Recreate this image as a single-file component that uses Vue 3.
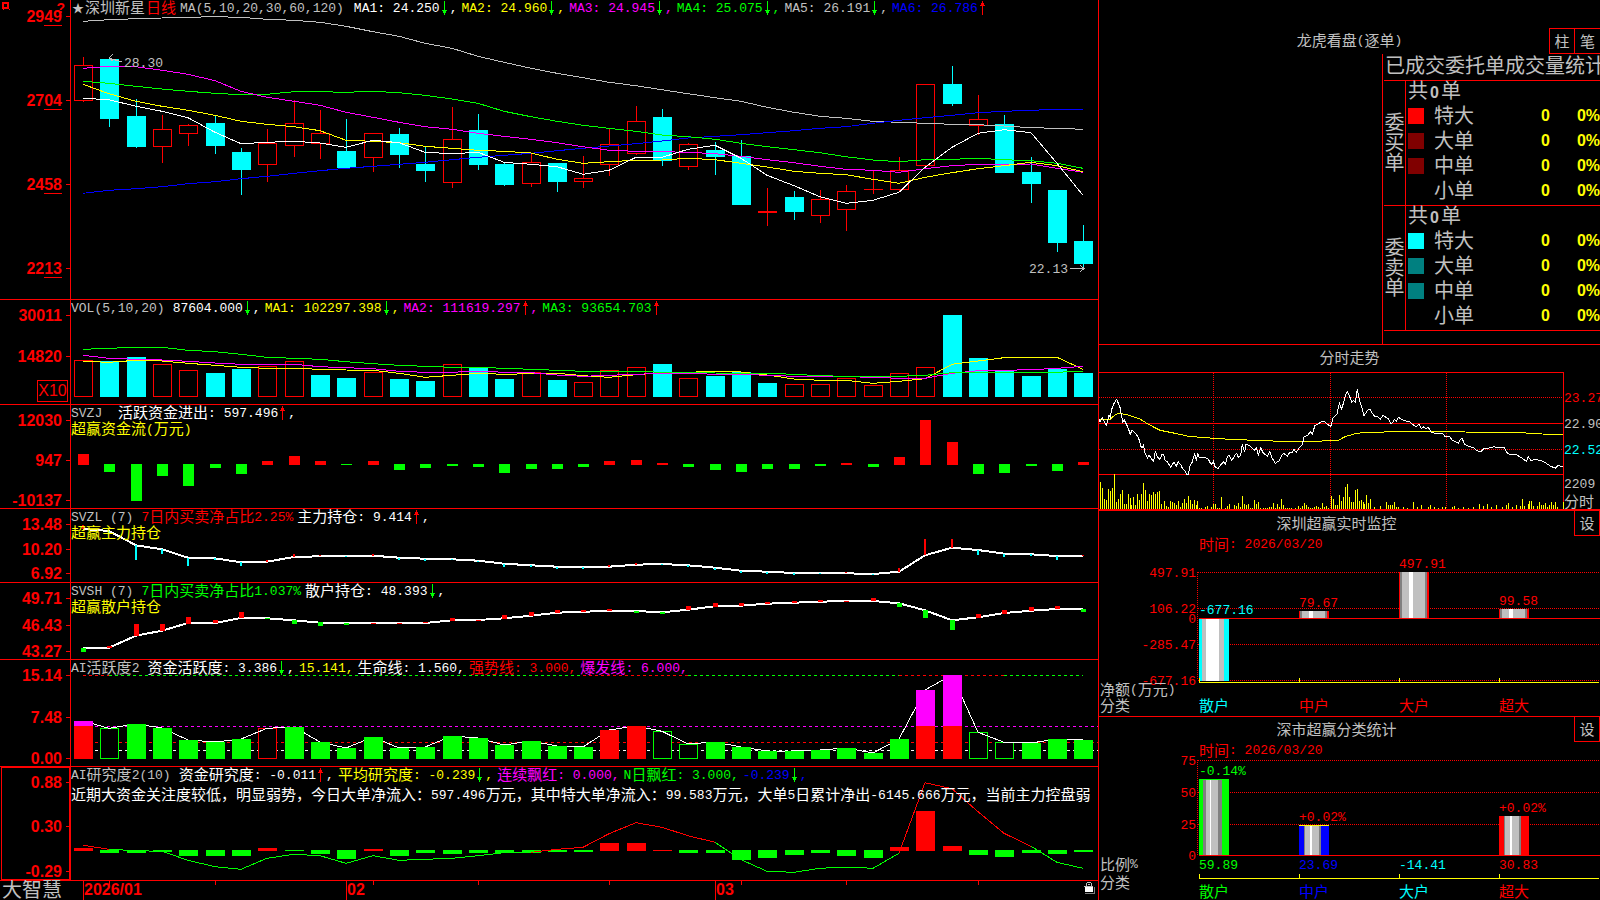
<script setup>
import { h } from 'vue'

/* Text with Chinese and Latin runs sized separately */
const Mixed = (props) =>
  h(
    'span',
    { class: 'mixed' },
    (String(props.text).match(/[\u2600-\uffef]+|[^\u2600-\uffef]+/g) || []).map((run) =>
      h('span', { class: /[\u2600-\uffef]/.test(run) ? 'zh' : 'en' }, run)
    )
  )
Mixed.props = ['text']

const RED = '#ff0000'
const GREEN = '#00ff00'
const CYAN = '#00ffff'
const YELLOW = '#ffff00'
const MAGENTA = '#ff00ff'
const WHITE = '#ffffff'
const GRAY = '#c0c0c0'
const BLUE = '#0000ff'

const PLOT_W = 1027
const cx = (i) => Math.floor(12.4 + i * 26.33)
/* Samples are kept in thirds of a chart unit */
const third = (v, base) => v / 3 + base
const line = (values, base) => values.map((v, i) => `${cx(i)},${third(v, base).toFixed(1)}`).join(' ')
const bar = (i, top, bottom, base, w = 19) => {
  const y = Math.round(third(top, base))
  return { x: cx(i) - Math.floor(w / 2), y, w, h: Math.max(1, Math.round(third(bottom, base)) - y) }
}

/* ---------- Price ---------- */
const priceRaw = [
  ['r', 171, 196, 302, 305], ['c', 177, 177, 357, 381], ['c', 297, 348, 441, 444], ['r', 345, 388, 440, 489],
  ['r', 372, 376, 401, 438], ['c', 346, 369, 438, 462], ['c', 444, 456, 510, 585], ['r', 387, 430, 494, 546],
  ['r', 300, 370, 437, 471], ['r', 330, 400, 431, 477], ['c', 357, 453, 504, 504], ['r', 400, 400, 473, 516],
  ['c', 384, 402, 465, 504], ['c', 439, 492, 513, 546], ['r', 321, 418, 548, 564], ['c', 342, 390, 495, 510],
  ['c', 490, 492, 555, 558], ['r', 461, 487, 551, 561], ['c', 489, 489, 546, 576], ['r', 468, 535, 545, 564],
  ['r', 387, 433, 494, 528], ['r', 318, 364, 461, 465], ['c', 327, 351, 483, 498], ['r', 429, 433, 500, 510],
  ['c', 426, 450, 471, 525], ['c', 420, 468, 615, 615], ['r', 564, 633, 639, 678], ['c', 573, 591, 636, 660],
  ['r', 570, 598, 647, 669], ['r', 555, 574, 629, 693], ['r', 513, 568, 568, 582], ['r', 471, 511, 569, 575],
  ['r', 253, 253, 497, 497], ['c', 198, 252, 312, 318], ['r', 285, 358, 377, 405], ['c', 345, 372, 519, 519],
  ['c', 471, 516, 552, 609], ['c', 570, 570, 729, 756], ['c', 675, 723, 792, 804]
]
const candles = priceRaw.map(([k, hi, top, bot, lo], i) => ({
  up: k === 'r', x: cx(i), hi: hi / 3, top: Math.round(top / 3), bot: Math.round(bot / 3), lo: lo / 3
}))
const priceLines = [
  { c: GRAY, v: [64, 59, 56, 54, 52, 50, 52, 58, 61, 67, 79, 95, 109, 130, 145, 169, 187, 205, 220, 233, 247, 257, 269, 281, 293, 304, 322, 337, 349, 355, 364, 367, 370, 373, 374, 378, 383, 385, 388] },
  { c: BLUE, v: [580, 571, 566, 560, 551, 545, 536, 529, 520, 512, 505, 499, 493, 487, 479, 472, 466, 460, 452, 445, 438, 431, 423, 414, 409, 404, 398, 392, 385, 380, 370, 361, 353, 346, 338, 334, 331, 328, 328] },
  { c: GREEN, v: [244, 250, 259, 267, 274, 280, 284, 283, 275, 275, 277, 274, 278, 286, 297, 310, 334, 350, 364, 376, 385, 394, 405, 410, 418, 430, 440, 449, 458, 470, 480, 485, 479, 478, 475, 479, 482, 490, 505] },
  { c: MAGENTA, v: [205, 199, 200, 211, 223, 242, 274, 292, 304, 316, 337, 352, 367, 380, 388, 400, 409, 418, 428, 440, 451, 454, 455, 457, 461, 469, 479, 488, 499, 508, 511, 517, 506, 497, 493, 493, 492, 505, 517] },
  { c: YELLOW, v: [253, 281, 304, 319, 331, 346, 364, 373, 380, 392, 421, 424, 428, 439, 445, 451, 454, 459, 478, 490, 485, 481, 480, 475, 479, 490, 501, 514, 520, 524, 538, 550, 532, 518, 506, 497, 487, 497, 515] },
  { c: WHITE, v: [295, 299, 319, 334, 353, 397, 431, 427, 424, 429, 442, 421, 428, 457, 461, 457, 487, 493, 500, 523, 511, 472, 472, 448, 436, 475, 526, 557, 590, 610, 601, 577, 502, 442, 400, 389, 398, 490, 586] }
].map((l) => ({ c: l.c, p: line(l.v, 0) }))

/* ---------- Volume ---------- */
const volTop = [211, 214, 201, 223, 241, 249, 237, 227, 214, 255, 264, 247, 267, 273, 223, 234, 267, 247, 270, 277, 241, 232, 222, 265, 258, 246, 279, 283, 283, 265, 286, 250, 232, 75, 204, 243, 258, 237, 249]
const volUp = [0, 3, 4, 7, 8, 11, 14, 17, 19, 20, 21, 23, 27, 28, 29, 30, 31, 32]
const volBars = volTop.map((t, i) => ({ ...bar(i, t, 321, -10), up: volUp.includes(i) }))
const volLines = [
  { c: YELLOW, v: [214, 217, 211, 213, 220, 226, 232, 235, 235, 238, 240, 241, 250, 262, 256, 250, 253, 251, 250, 257, 262, 254, 248, 247, 244, 246, 255, 267, 271, 271, 280, 274, 266, 223, 213, 203, 202, 202, 238] },
  { c: MAGENTA, v: [196, 205, 208, 210, 214, 219, 223, 223, 223, 230, 233, 236, 244, 247, 247, 243, 247, 248, 255, 259, 256, 253, 250, 250, 253, 253, 256, 259, 259, 260, 262, 265, 265, 250, 242, 241, 239, 235, 229] },
  { c: GREEN, v: [178, 175, 172, 172, 181, 185, 193, 202, 205, 208, 215, 221, 226, 229, 232, 232, 235, 238, 241, 244, 244, 244, 247, 247, 249, 250, 250, 253, 257, 259, 259, 259, 256, 248, 247, 247, 247, 247, 243] }
].map((l) => ({ c: l.c, p: line(l.v, -10) }))

/* ---------- Money flow: values above 522 hang below the zero line ---------- */
const flow = [492, 546, 633, 558, 588, 534, 552, 513, 498, 513, 525, 513, 540, 534, 528, 531, 549, 537, 537, 531, 513, 510, 519, 531, 540, 546, 537, 537, 528, 519, 531, 501, 390, 456, 552, 549, 528, 543, 516]
const flowBars = flow.map((v, i) => (v < 522 ? { ...bar(i, v, 525, -115, 11), c: RED } : { ...bar(i, 522, v, -115, 11), c: GREEN }))

/* ---------- Main force / retail positions ---------- */
const main = [717, 723, 766, 778, 803, 805, 817, 815, 801, 799, 798, 797, 803, 806, 808, 812, 821, 826, 830, 831, 830, 824, 822, 826, 833, 842, 845, 849, 849, 850, 852, 845, 796, 773, 780, 791, 793, 798, 798]
const mainEnd = [704, 731, 809, 791, 827, 809, 827, 810, 792, 795, 802, 793, 809, 812, 811, 814, 831, 831, 836, 836, 825, 819, 824, 831, 839, 848, 851, 854, 851, 846, 854, 834, 747, 747, 795, 800, 798, 809, 795]
const mainLine = line(main, -219)
const mainTicks = main.map((v, i) => {
  const e = mainEnd[i]
  return { ...bar(i, Math.min(v, e), Math.max(v, e), -219, 2), c: e < v ? RED : CYAN }
})
const retail = [204, 203, 167, 152, 129, 129, 114, 115, 121, 128, 129, 129, 129, 129, 121, 120, 115, 107, 98, 95, 93, 93, 97, 89, 79, 77, 71, 68, 65, 63, 63, 70, 91, 121, 112, 99, 92, 87, 87]
const retailSpan = [
  ['g', 204, 216], ['r', 198, 203], ['r', 132, 167], ['r', 132, 153], ['r', 111, 131], ['r', 120, 129], ['r', 96, 113],
  ['g', 114, 117], ['g', 120, 132], ['g', 126, 138], ['g', 129, 135], ['r', 128, 129], ['r', 129, 132], ['r', 126, 129],
  ['r', 114, 123], ['r', 120, 123], ['r', 105, 117], ['r', 96, 107], ['r', 90, 98], ['r', 90, 95], ['r', 87, 93],
  ['g', 93, 98], ['g', 96, 102], ['r', 78, 90], ['r', 69, 80], ['r', 69, 77], ['r', 66, 71], ['r', 63, 69], ['r', 60, 66],
  ['r', 63, 66], ['r', 54, 63], ['g', 70, 81], ['g', 90, 114], ['g', 120, 150], ['r', 102, 113], ['r', 90, 101],
  ['r', 81, 93], ['r', 78, 87], ['g', 87, 96]
]
const retailLine = line(retail, -3)
const retailTicks = retailSpan.map(([k, a, b], i) => ({ ...bar(i, a, b, -3, 5), c: k === 'r' ? RED : GREEN }))

/* ---------- Activity ---------- */
const actTop = [423, 445, 432, 444, 480, 486, 477, 445, 441, 486, 504, 471, 504, 501, 468, 474, 495, 483, 498, 501, 450, 438, 454, 492, 486, 501, 513, 513, 510, 504, 519, 477, 330, 285, 457, 487, 489, 477, 480]
const hollow = { 1: GREEN, 7: RED, 22: GREEN, 23: GREEN, 34: GREEN, 35: GREEN }
const hot = [0, 20, 21, 32, 33]
const actHollow = Object.keys(hollow).map((i) => ({ ...bar(+i, actTop[i], 537, -80), c: hollow[i] }))
const actSolid = actTop
  .map((t, i) => ({ i, t }))
  .filter(({ i }) => !hollow[i])
  .map(({ i, t }) => ({ ...bar(i, Math.max(t, hot.includes(i) ? 438 : 0), 537, -80), c: hot.includes(i) ? RED : GREEN }))
const actPeaks = [0, 32, 33].map((i) => bar(i, actTop[i], 438, -80))
const actLine = line(actTop, -80)
const actCap = [[0, 1, RED], [1, 19, GREEN], [19, 23, RED], [23, 31, GREEN], [31, 35, RED], [35, 38, GREEN]].map(([a, b, c]) => ({ a: cx(a), b: cx(b), c }))

/* ---------- Research ---------- */
const res = [804, 819, 819, 816, 828, 828, 828, 804, 813, 822, 837, 807, 828, 819, 822, 819, 819, 819, 816, 816, 789, 789, 810, 819, 819, 840, 834, 825, 819, 828, 834, 801, 693, 798, 825, 831, 819, 822, 816]
const resBars = res.map((v, i) => (v <= 810 ? { ...bar(i, v, 813, -187), c: RED } : { ...bar(i, 810, v, -187), c: GREEN }))
const resV = [796, 808, 812, 814, 841, 860, 868, 835, 823, 827, 850, 827, 841, 838, 835, 827, 818, 817, 808, 802, 761, 728, 742, 767, 787, 839, 874, 877, 865, 861, 865, 820, 608, 626, 695, 760, 799, 847, 865]
const resPts = line(resV, -187).split(' ')
const resLines = [[0, 1, RED], [1, 17, GREEN], [17, 24, RED], [24, 31, GREEN], [31, 36, RED], [36, 38, GREEN]].map(([a, b, c]) => ({ c, p: resPts.slice(a, b + 1).join(' ') }))

/* ---------- Panels ---------- */
const panels = [
  {
    id: 'price', height: 300, axis: [['29', '49', 16], ['27', '04', 100], ['24', '58', 184], ['22', '13', 268]],
    title: '',
    items: [
      ['MA1: 24.250', WHITE, 'd', ','], ['MA2: 24.960', YELLOW, 'd', ','], ['MA3: 24.945', MAGENTA, 'd', ','],
      ['MA4: 25.075', GREEN, 'd', ','], ['MA5: 26.191', GRAY, 'd', ','], ['MA6: 26.786', BLUE, 'u', '']
    ]
  },
  {
    id: 'vol', height: 105, axis: [['30011', '', 15], ['14820', '', 56]], title: 'VOL(5,10,20)',
    items: [['87604.000', WHITE, 'd', ','], ['MA1: 102297.398', YELLOW, 'd', ','], ['MA2: 111619.297', MAGENTA, 'u', ','], ['MA3: 93654.703', GREEN, 'u', '']]
  },
  {
    id: 'flow', height: 104, axis: [['12030', '', 15], ['947', '', 55], ['-10137', '', 95]], title: 'SVZJ ',
    items: [['活跃资金进出: 597.496', WHITE, 'u', ',']], note: '超赢资金流(万元)'
  },
  {
    id: 'main', height: 74, axis: [['13.48', '', 15], ['10.20', '', 40], ['6.92', '', 64]], title: 'SVZL (7)',
    items: [['7日内买卖净占比2.25%', RED, '', ''], ['主力持仓: 9.414', WHITE, 'u', ',']], note: '超赢主力持仓'
  },
  {
    id: 'retail', height: 77, axis: [['49.71', '', 15], ['46.43', '', 42], ['43.27', '', 68]], title: 'SVSH (7)',
    items: [['7日内买卖净占比1.037%', GREEN, '', ''], ['散户持仓: 48.393', WHITE, 'd', ',']], note: '超赢散户持仓'
  },
  {
    id: 'act', height: 107, axis: [['15.14', '', 15], ['7.48', '', 57], ['0.00', '', 98]], title: 'AI活跃度2',
    items: [['资金活跃度: 3.386', WHITE, 'd', ','], ['15.141,', YELLOW, '', ''], ['生命线: 1.560,', WHITE, '', ''], ['强势线: 3.000,', RED, '', ''], ['爆发线: 6.000,', MAGENTA, '', '']]
  },
  {
    id: 'res', height: 114, axis: [['0.88', '', 15], ['0.30', '', 60], ['-0.29', '', 105]], title: 'AI研究度2(10)',
    items: [['资金研究度: -0.011', WHITE, 'u', ','], ['平均研究度: -0.239', YELLOW, 'd', ','], ['连续飘红: 0.000,', MAGENTA, '', ''], ['N日飘红: 3.000,', GREEN, '', ''], ['-0.239', BLUE, 'd', ',']],
    advice: '近期大资金关注度较低，明显弱势，今日大单净流入：597.496万元，其中特大单净流入：99.583万元，大单5日累计净出-6145.666万元，当前主力控盘弱'
  }
]
const pct = (v, total) => (v / total) * 100 + '%'

const dateMarks = [{ i: 0, t: '2026/01' }, { i: 10, t: '02' }, { i: 24, t: '03' }]
const dateTicks = [1, 5, 11, 15, 20, 25, 29, 34].map(cx)

/* ---------- Orders ---------- */
const orders = [
  { side: '委买单', rows: [['特大', '#ff0000'], ['大单', '#800000'], ['中单', '#800000'], ['小单', '']] },
  { side: '委卖单', rows: [['特大', '#00ffff'], ['大单', '#008080'], ['中单', '#008080'], ['小单', '']] }
]

/* ---------- Intraday ---------- */
const tickA = [12, 148, 15, 157, 22, 142, 27, 153, 34, 166, 42, 135, 46, 142, 50, 118, 58, 98, 65, 88, 70, 100, 76, 115, 80, 140, 83, 157, 88, 150, 94, 162, 100, 175, 106, 193, 111, 180, 117, 187, 124, 193, 131, 205, 137, 228, 141, 234, 145, 226, 150, 248, 157, 264, 163, 256, 170, 268, 176, 274, 181, 245, 188, 262, 194, 268, 202, 252, 206, 254, 210, 270, 218, 277, 227, 292, 237, 276, 244, 288, 250, 276, 258, 285, 262, 295, 270, 304, 275, 313, 280, 313, 286, 284, 292, 276, 299, 250, 304, 272, 308, 250, 312, 262, 330, 262, 340, 268, 349, 284, 355, 274, 361, 292, 369, 296, 376, 286, 386, 275, 391, 283, 397, 260, 402, 256, 410, 272, 420, 256, 425, 250, 430, 262, 437, 256, 442, 223, 449, 247, 453, 223, 462, 226, 470, 232, 478, 242, 484, 233, 490, 254, 497, 233, 504, 248, 517, 259, 524, 244, 530, 262, 541, 280, 553, 272, 560, 256, 566, 250, 577, 259, 584, 247, 592, 247, 596, 238, 604, 247, 612, 235, 622, 224, 627, 201, 640, 194, 646, 184, 652, 193, 660, 166, 670, 162, 680, 154, 688, 154, 696, 163]
const tickB = [18, 169, 24, 145, 30, 138, 36, 132, 43, 100, 50, 118, 56, 96, 60, 80, 67, 64, 74, 80, 80, 97, 86, 92, 91, 97, 97, 58, 103, 90, 110, 110, 117, 137, 122, 130, 130, 118, 136, 119, 142, 130, 148, 138, 156, 138, 166, 148, 174, 136, 184, 143, 190, 146, 197, 160, 203, 158, 208, 149, 214, 154, 220, 142, 228, 147, 244, 154, 255, 156, 262, 162, 272, 170, 283, 163, 289, 175, 297, 170, 303, 177, 310, 172, 318, 186, 330, 190, 352, 190, 360, 199, 374, 200, 382, 211, 400, 219, 408, 206, 412, 206, 418, 222, 430, 229, 445, 233, 456, 242, 468, 245, 476, 236, 490, 235, 506, 230, 520, 234, 538, 233, 548, 251, 560, 254, 572, 253, 590, 264, 604, 274, 610, 260, 618, 272, 630, 268, 650, 273, 664, 280, 676, 288, 691, 295, 698, 287, 714, 289]
const avgA = [12, 149, 45, 149, 55, 139, 68, 130, 97, 134, 135, 147, 160, 163, 195, 181, 240, 190, 280, 199, 330, 203, 390, 207, 477, 211, 560, 214, 675, 214, 690, 212]
const avgB = [40, 211, 60, 200, 95, 190, 125, 187, 230, 185, 325, 184, 420, 186, 590, 188, 650, 192, 714, 193]
const qtyA = [16, 336, 22, 354, 28, 387, 34, 390, 40, 357, 46, 363, 52, 354, 58, 312, 64, 396, 70, 387, 76, 372, 82, 360, 88, 402, 94, 402, 100, 372, 106, 384, 109, 405, 115, 381, 121, 405, 127, 372, 133, 390, 139, 372, 145, 339, 151, 360, 157, 393, 163, 372, 169, 375, 175, 366, 181, 372, 187, 366, 193, 363, 199, 402, 208, 393, 214, 408, 220, 410, 226, 393, 232, 396, 238, 399, 244, 405, 250, 393, 256, 411, 262, 399, 268, 387, 274, 399, 280, 378, 286, 390, 292, 402, 298, 390, 304, 405, 307, 393, 313, 414, 319, 414, 331, 411, 337, 408, 349, 411, 355, 402, 361, 402, 367, 414, 373, 414, 379, 381, 391, 414, 397, 408, 403, 402, 418, 405, 424, 408, 430, 399, 436, 411, 442, 378, 448, 402, 454, 405, 460, 402, 466, 414, 472, 414, 478, 390, 484, 402, 490, 396, 496, 414, 505, 414, 511, 414, 517, 414, 523, 411, 529, 411, 535, 399, 541, 414, 547, 402, 553, 411, 559, 387, 565, 405, 571, 414, 577, 414, 583, 414, 589, 414, 601, 414, 610, 408, 616, 414, 622, 408, 628, 399, 634, 405, 640, 411, 646, 414, 652, 414, 658, 411, 664, 408, 670, 411, 676, 414, 682, 399, 688, 411, 694, 408, 700, 414]
const qtyB = [19, 378, 25, 387, 31, 405, 37, 405, 43, 375, 49, 393, 55, 381, 61, 351, 67, 342, 73, 381, 79, 396, 85, 396, 91, 360, 97, 357, 103, 393, 109, 390, 115, 396, 118, 402, 124, 375, 130, 399, 136, 387, 148, 411, 166, 408, 184, 396, 190, 405, 196, 405, 202, 405, 208, 396, 214, 411, 220, 411, 235, 411, 247, 414, 265, 396, 277, 411, 289, 405, 310, 411, 316, 405, 328, 411, 340, 414, 352, 411, 361, 411, 382, 411, 388, 408, 400, 414, 415, 411, 430, 414, 445, 411, 463, 402, 475, 408, 487, 402, 499, 411, 514, 405, 532, 411, 544, 405, 550, 399, 562, 411, 574, 405, 586, 408, 592, 387, 598, 408, 610, 402, 613, 393, 619, 393, 625, 408, 637, 408, 643, 396, 649, 405, 655, 405, 661, 399, 667, 411, 673, 405, 679, 396, 685, 405, 691, 396, 697, 411, 715, 396]
const pairs = (a, dx) => {
  const out = []
  for (let i = 0; i < a.length; i += 2) out.push([(a[i] + dx) / 3 - 4, a[i + 1] / 3 + 25])
  return out
}
const join = (a, b) => [...pairs(a, 0), ...pairs(b, 690)]
const toPoints = (list) => list.map((p) => p.map((n) => n.toFixed(1)).join(',')).join(' ')
const tickLine = toPoints(join(tickA, tickB))
const avgLine = toPoints(join(avgA, avgB))
const qtyBars = join(qtyA, qtyB).map(([x, y]) => ({ x: Math.floor(x), y: Math.round(y), h: 164 - Math.round(y) }))
const minuteLabels = [['23.27', 53, RED], ['22.90', 79, GRAY], ['22.52', 105, CYAN], ['2209', 139, GRAY], ['分时', 156, GRAY]]

/* ---------- Category charts ---------- */
const stripes = (x, list) => {
  let at = x
  return list.map(([w, c]) => {
    const s = { x: at, w, c }
    at += w
    return s
  })
}
const DARK = '#808080'
const thin = [[1, RED], [2, DARK], [7, GRAY], [4, WHITE], [12, GRAY], [2, DARK], [2, RED]]
const wide = (c) => [[5, c], [1, DARK], [5, GRAY], [2, WHITE], [7, GRAY], [2, DARK], [8, c]]
const columns = [100, 200, 300, 400]
const charts = [
  {
    title: '深圳超赢实时监控', height: 206, grid: [61, 97, 133, 169], zero: 107, axis: [61, 169], base: 171,
    bars: [
      { y: 108, h: 62, s: stripes(100, [[3, CYAN], [4, GRAY], [13, WHITE], [5, GRAY], [5, CYAN]]) },
      { y: 100, h: 7, s: stripes(200, thin) }, { y: 61, h: 46, s: stripes(300, thin) }, { y: 98, h: 9, s: stripes(400, thin) }
    ],
    caps: [],
    right: [['497.91', 62], ['106.22', 98], ['0', 108], ['-285.47', 134], ['-677.16', 170]],
    left: [
      ['时间: 2026/03/20', 100, 33, RED], ['-677.16', 100, 99, CYAN], ['79.67', 200, 92, RED], ['497.91', 300, 53, RED], ['99.58', 400, 90, RED],
      ['净额(万元)', 1, 178, GRAY], ['分类', 1, 194, GRAY], ['散户', 100, 194, CYAN], ['中户', 200, 194, RED], ['大户', 300, 194, RED], ['超大', 400, 194, RED]
    ]
  },
  {
    title: '深市超赢分类统计', height: 183, grid: [43, 75, 107], zero: 138, axis: [43, 138], base: 161,
    bars: [
      { y: 62, h: 76, s: stripes(100, [[4, GREEN], [3, DARK], [4, GRAY], [1, WHITE], [7, GRAY], [4, DARK], [7, GREEN]]) },
      { y: 108, h: 30, s: stripes(200, wide(BLUE)) }, { y: 99, h: 39, s: stripes(400, wide(RED)) }
    ],
    caps: [{ x: 100, y: 62, c: GREEN }, { x: 200, y: 108, c: YELLOW }],
    right: [['75', 44], ['50', 76], ['25', 108], ['0', 139]],
    left: [
      ['时间: 2026/03/20', 100, 33, RED], ['-0.14%', 100, 54, GREEN], ['+0.02%', 200, 100, RED], ['+0.02%', 400, 91, RED],
      ['59.89', 100, 148, GREEN], ['23.69', 200, 148, BLUE], ['-14.41', 300, 148, CYAN], ['30.83', 400, 148, RED],
      ['比例%', 1, 147, GRAY], ['分类', 1, 165, GRAY], ['散户', 100, 174, GREEN], ['中户', 200, 174, BLUE], ['大户', 300, 174, CYAN], ['超大', 400, 174, RED]
    ]
  }
]
</script>

<template>
  <div class="terminal">
    <main class="charts">
      <section v-for="p in panels" :key="p.id" class="panel" :class="p.id">
        <div class="gutter">
          <template v-if="p.id === 'price'">
            <svg class="pin" width="8" height="8" viewBox="0 0 8 8"><path d="M1 1h5v5H1z" fill="none" stroke="#f00" stroke-width="2" /><path d="M7 7h1v1H7zM1 7h1v1H1z" fill="#f00" /></svg>
            <span class="help">?</span>
          </template>
          <span v-for="a in p.axis" :key="a[2]" class="scale" :style="{ top: pct(a[2], p.height) }">{{ a[0] }}<span v-if="a[1]" class="tail">{{ a[1] }}</span></span>
          <span v-if="p.id === 'vol'" class="times">X10</span>
        </div>
        <div class="plot">
          <svg class="canvas" :viewBox="`0 0 ${PLOT_W} ${p.height}`" preserveAspectRatio="none" shape-rendering="crispEdges">
            <template v-if="p.id === 'price'">
              <g v-for="(c, i) in candles" :key="i">
                <template v-if="c.up">
                  <path :d="`M${c.x + 0.5} ${c.hi}V${c.top}M${c.x + 0.5} ${c.bot}V${c.lo}`" :stroke="RED" />
                  <rect :x="c.x - 8.5" :y="c.top + 0.5" width="18" :height="Math.max(0.1, c.bot - c.top - 1)" fill="none" :stroke="RED" />
                </template>
                <template v-else>
                  <path :d="`M${c.x + 0.5} ${c.hi}V${c.lo}`" :stroke="CYAN" />
                  <rect :x="c.x - 9" :y="c.top" width="19" :height="c.bot - c.top" :fill="CYAN" />
                </template>
              </g>
              <polyline v-for="(l, i) in priceLines" :key="'m' + i" :points="l.p" fill="none" :stroke="l.c" />
              <path d="M38 58L51 62M38 58L42 54M38 58L42 61M999 268.500H1012M1009 265L1013 268.500L1009 272" fill="none" :stroke="GRAY" />
            </template>
            <template v-else-if="p.id === 'vol'">
              <template v-for="(b, i) in volBars" :key="i">
                <rect v-if="b.up" :x="b.x + 0.5" :y="b.y + 0.5" :width="b.w - 1" :height="b.h - 1" fill="none" :stroke="RED" />
                <rect v-else :x="b.x" :y="b.y" :width="b.w" :height="b.h" :fill="CYAN" />
              </template>
              <polyline v-for="(l, i) in volLines" :key="'v' + i" :points="l.p" fill="none" :stroke="l.c" />
            </template>
            <template v-else-if="p.id === 'flow'">
              <rect v-for="(b, i) in flowBars" :key="i" :x="b.x" :y="b.y" :width="b.w" :height="b.h" :fill="b.c" />
            </template>
            <template v-else-if="p.id === 'main'">
              <polyline :points="mainLine" fill="none" :stroke="WHITE" stroke-width="2" />
              <rect v-for="(b, i) in mainTicks" :key="i" :x="b.x" :y="b.y" :width="b.w" :height="b.h" :fill="b.c" />
            </template>
            <template v-else-if="p.id === 'retail'">
              <polyline :points="retailLine" fill="none" :stroke="WHITE" stroke-width="2" />
              <rect v-for="(b, i) in retailTicks" :key="i" :x="b.x" :y="b.y" :width="b.w" :height="b.h" :fill="b.c" />
            </template>
            <template v-else-if="p.id === 'act'">
              <path v-for="s in actCap" :key="s.a" :d="`M${s.a} 15.500H${s.b}`" :stroke="s.c" stroke-dasharray="3 3" />
              <path d="M12 66.500H1027" :stroke="MAGENTA" stroke-dasharray="3 3" />
              <path d="M12 82.500H1027" :stroke="RED" stroke-dasharray="3 3" />
              <path d="M12 90.500H1027" :stroke="WHITE" stroke-dasharray="3 3" />
              <rect v-for="b in actHollow" :key="'h' + b.x" :x="b.x + 0.5" :y="b.y + 0.5" :width="b.w - 1" :height="b.h - 1" fill="#000" :stroke="b.c" />
              <polyline :points="actLine" fill="none" :stroke="WHITE" />
              <rect v-for="b in actSolid" :key="'s' + b.x" :x="b.x" :y="b.y" :width="b.w" :height="b.h" :fill="b.c" />
              <rect v-for="b in actPeaks" :key="'p' + b.x" :x="b.x" :y="b.y" :width="b.w" :height="b.h" :fill="MAGENTA" />
            </template>
            <template v-else>
              <rect v-for="(b, i) in resBars" :key="i" :x="b.x" :y="b.y" :width="b.w" :height="b.h" :fill="b.c" />
              <polyline v-for="(l, i) in resLines" :key="'r' + i" :points="l.p" fill="none" :stroke="l.c" />
            </template>
          </svg>
          <div class="legend">
            <span v-if="p.id === 'price'" class="name"><span class="star">★</span><Mixed text="深圳新星" /><Mixed class="period" text="日线" /><Mixed text="MA(5,10,20,30,60,120)" /></span>
            <Mixed v-else class="name" :text="p.title" />
            <span v-for="(m, i) in p.items" :key="i" class="item" :style="{ color: m[1] }">
              <Mixed :text="m[0]" />
              <svg v-if="m[2]" class="arrow" width="10" height="14" viewBox="0 0 10 14" shape-rendering="crispEdges">
                <path v-if="m[2] === 'd'" d="M4 0h1v14H4zM2 9h5v1H2zM3 10h3v2H3z" :fill="GREEN" />
                <path v-else d="M4 0h1v14H4zM2 4h5v1H2zM3 2h3v2H3z" :fill="RED" />
              </svg>
              <Mixed v-if="m[3]" :text="m[3]" />
            </span>
          </div>
          <div v-if="p.note" class="note"><Mixed :text="p.note" /></div>
          <div v-if="p.advice" class="advice"><Mixed :text="p.advice" /></div>
          <template v-if="p.id === 'price'">
            <span class="mark" :style="{ left: pct(53, PLOT_W), top: pct(64, 300) }">28.30</span>
            <span class="mark" :style="{ left: pct(958, PLOT_W), top: pct(270, 300) }">22.13</span>
          </template>
        </div>
      </section>
      <footer class="dates">
        <div class="brand">大智慧</div>
        <div class="plot">
          <svg class="canvas" :viewBox="`0 0 ${PLOT_W} 19`" preserveAspectRatio="none" shape-rendering="crispEdges">
            <path v-for="d in dateMarks" :key="d.t" :d="`M${cx(d.i) + 0.5} 0V19`" :stroke="RED" />
            <path v-for="x in dateTicks" :key="x" :d="`M${x + 0.5} 0V4`" :stroke="RED" />
          </svg>
          <span v-for="d in dateMarks" :key="d.t" class="date" :style="{ left: pct(cx(d.i) + 1, PLOT_W) }">{{ d.t }}</span>
          <svg class="lock" width="11" height="12" viewBox="0 0 11 12" shape-rendering="crispEdges">
            <path d="M10 5h1v7H1v-1h9z" fill="#808080" />
            <path d="M1 5h8v5H1z" fill="#fff" />
            <path d="M0 4h9v1H0zM2 1h1v3H2zM7 1h1v3H7zM3 0h4v1H3zM4 2h2v1H4z" fill="#c0c0c0" />
          </svg>
        </div>
      </footer>
    </main>

    <aside class="side">
      <section class="book">
        <header class="bookhead">
          <h2><Mixed text="龙虎看盘(逐单)" /></h2>
          <div class="tools"><button type="button">柱</button><button type="button">笔</button></div>
        </header>
        <div class="stats">
          <div class="caption">已成交委托单成交量统计</div>
          <table>
            <colgroup><col class="c1" /><col class="c2" /><col class="c3" /><col class="c4" /><col class="c5" /></colgroup>
            <tbody v-for="o in orders" :key="o.side">
              <tr>
                <th rowspan="5" scope="rowgroup" class="sidename"><span v-for="ch in o.side" :key="ch">{{ ch }}</span></th>
                <td colspan="4" class="total">共<b>0</b>单</td>
              </tr>
              <tr v-for="r in o.rows" :key="r[0]">
                <td><span v-if="r[1]" class="swatch" :style="{ background: r[1] }"></span></td>
                <th scope="row" class="kind">{{ r[0] }}</th>
                <td class="num">0</td>
                <td class="num">0%</td>
              </tr>
            </tbody>
          </table>
        </div>
      </section>

      <section class="minute">
        <h2><Mixed text="分时走势" /></h2>
        <svg class="canvas" viewBox="0 0 501 164" preserveAspectRatio="none" shape-rendering="crispEdges">
          <path d="M0 52.500H464M0 104.500H464M114.500 28V164M231.500 28V164M347.500 28V164" fill="none" :stroke="RED" stroke-dasharray="1 1" />
          <path d="M0 27.500H464.500V164M0 78.500H464M0 129.500H464" fill="none" :stroke="RED" />
          <rect v-for="(b, i) in qtyBars" :key="i" :x="b.x" :y="b.y" width="1" :height="b.h" :fill="YELLOW" />
          <polyline :points="avgLine" fill="none" :stroke="YELLOW" />
          <polyline :points="tickLine" fill="none" :stroke="WHITE" />
        </svg>
        <span v-for="m in minuteLabels" :key="m[0]" class="label" :style="{ left: pct(465, 501), top: pct(m[1], 164), color: m[2] }"><Mixed :text="m[0]" /></span>
      </section>

      <section v-for="c in charts" :key="c.title" class="category">
        <header class="cathead"><h2><Mixed :text="c.title" /></h2><button type="button">设</button></header>
        <svg class="canvas" :viewBox="`0 0 501 ${c.height}`" preserveAspectRatio="none" shape-rendering="crispEdges">
          <path v-for="g in c.grid" :key="g" :d="`M99 ${g + 0.5}H501`" :stroke="RED" stroke-dasharray="1 1" />
          <path :d="`M98.500 ${c.axis[0]}V${c.axis[1]}`" :stroke="RED" stroke-dasharray="1 1" />
          <template v-for="(b, i) in c.bars" :key="i">
            <rect v-for="s in b.s" :key="s.x" :x="s.x" :y="b.y" :width="s.w" :height="b.h" :fill="s.c" />
          </template>
          <rect v-for="k in c.caps" :key="k.x" :x="k.x" :y="k.y" width="30" height="1" :fill="k.c" />
          <path :d="`M100 ${c.zero + 0.5}H501`" :stroke="RED" />
          <path :d="`M100 ${c.base + 0.5}H500`" :stroke="YELLOW" />
          <path v-for="x in columns" :key="'t' + x" :d="`M${x + 0.5} ${c.base - 4}V${c.base}`" :stroke="YELLOW" />
        </svg>
        <span v-for="r in c.right" :key="r[0]" class="label" :style="{ right: pct(404, 501), top: pct(r[1], c.height), color: RED }"><Mixed :text="r[0]" /></span>
        <span v-for="(l, i) in c.left" :key="i" class="label" :style="{ left: pct(l[1], 501), top: pct(l[2], c.height), color: l[3] }"><Mixed :text="l[0]" /></span>
      </section>
    </aside>
  </div>
</template>

<style>
body {
  background: #000;
}
</style>

<style scoped>
.terminal {
  display: grid;
  grid-template-columns: minmax(0, 1098fr) minmax(0, 502fr);
  height: 100vh;
  overflow: hidden;
  background: #000;
  color: #c0c0c0;
  font-family: "Liberation Mono", "Noto Sans CJK SC", monospace;
  font-size: 13px;
  line-height: 16px;
  white-space: nowrap;
}
.charts {
  display: grid;
  grid-template-rows:
    minmax(0, 300fr) minmax(0, 105fr) minmax(0, 104fr) minmax(0, 74fr) minmax(0, 77fr)
    minmax(0, 107fr) minmax(0, 114fr) minmax(0, 19fr);
}
.side {
  display: grid;
  grid-template-rows: minmax(0, 345fr) minmax(0, 166fr) minmax(0, 206fr) minmax(0, 183fr);
  border-left: 1px solid #f00;
  overflow: hidden;
}
:deep(.mixed) {
  display: inline-flex;
  align-items: center;
  height: 16px;
  white-space: pre;
}
:deep(.zh) {
  font-family: "Noto Sans CJK SC", sans-serif;
  font-size: 15px;
}
:deep(.en) {
  padding-top: 2px;
}
.charts :deep(.zh) {
  padding-bottom: 2px;
}
h2 {
  margin: 0;
  font-size: 13px;
  font-weight: 400;
}
button {
  width: 26px;
  height: 26px;
  padding: 0;
  border: 1px solid #f00;
  background: #000;
  color: #c0c0c0;
  font-family: "Noto Sans CJK SC", sans-serif;
  font-size: 15px;
  line-height: 16px;
}
.canvas {
  position: absolute;
  inset: 0;
  width: 100%;
  height: 100%;
}
.panel {
  display: grid;
  grid-template-columns: 71px minmax(0, 1fr);
  box-shadow: inset 0 -1px #f00;
}
.gutter {
  position: relative;
  border-right: 1px solid #f00;
  color: #f00;
  font-family: "Liberation Sans", sans-serif;
  font-size: 16px;
}
.res .gutter {
  margin-bottom: 1px;
}
.res .gutter::before {
  content: "";
  position: absolute;
  inset: 0 0 0 1px;
  border: 1px solid #f00;
}
.scale {
  position: absolute;
  right: 0;
  margin-top: -7px;
  padding-right: 8px;
  line-height: 16px;
  font-weight: 700;
}
.scale::after {
  content: "";
  position: absolute;
  right: 0;
  top: 7px;
  width: 4px;
  height: 1px;
  background: #f00;
}
.tail {
  display: inline-block;
  box-shadow: 0 1px #f00;
}
.pin {
  position: absolute;
  left: 2px;
  top: 2px;
}
.help {
  position: absolute;
  right: 5px;
  top: 0;
  font-weight: 700;
  font-size: 14px;
}
.times {
  position: absolute;
  right: 2px;
  bottom: 3px;
  width: 29px;
  border: 1px solid #f00;
  line-height: 20px;
  text-align: center;
}
.plot {
  position: relative;
  overflow: hidden;
}
.legend {
  position: relative;
  display: flex;
  gap: 4px;
  height: 16px;
}
.name {
  display: inline-flex;
  margin-right: 4px;
}
.price .name {
  margin-right: 6px;
}
.star {
  width: 14px;
  font-family: "Noto Sans CJK SC", sans-serif;
  font-size: 12px;
  text-align: center;
}
.period {
  margin: 0 4px 0 1px;
  color: #f00;
}
.item {
  display: inline-flex;
  align-items: center;
}
.note {
  position: relative;
  height: 14px;
  color: #ff0;
  line-height: 14px;
}
.advice {
  position: relative;
  margin-top: 4px;
  color: #fff;
}
.mark {
  position: absolute;
  margin-top: -8px;
}
.dates {
  display: grid;
  grid-template-columns: 71px minmax(0, 1fr);
}
.brand {
  padding-left: 2px;
  font-family: "Noto Sans CJK SC", sans-serif;
  font-size: 20px;
  line-height: 16px;
}
.date {
  position: absolute;
  top: 0;
  color: #f00;
  font-family: "Liberation Sans", sans-serif;
  font-size: 16px;
  font-weight: 700;
  line-height: 18px;
}
.lock {
  position: absolute;
  right: 3px;
  top: 1px;
}
.book {
  display: flex;
  flex-direction: column;
  border-bottom: 1px solid #f00;
}
.bookhead {
  position: relative;
  display: flex;
  align-items: center;
  justify-content: center;
  height: 26px;
  margin-top: 28px;
}
.tools {
  position: absolute;
  right: 0;
  top: 0;
  display: flex;
}
.tools button + button {
  border-left: 0;
  border-right: 0;
  width: 25px;
}
.stats {
  flex: 1;
  align-self: flex-end;
  width: 218px;
  overflow: hidden;
  border-left: 1px solid #f00;
  box-sizing: border-box;
  font-family: "Liberation Sans", "Noto Sans CJK SC", sans-serif;
  font-size: 20px;
}
.caption {
  height: 26px;
  padding-left: 2px;
  line-height: 24px;
}
table {
  width: 216px;
  margin-left: 1px;
  border-spacing: 0;
  table-layout: fixed;
}
.c1 { width: 22px; }
.c2 { width: 28px; }
.c3 { width: 48px; }
.c4 { width: 68px; }
.c5 { width: 50px; }
th,
td {
  height: 25px;
  padding: 0;
  font-weight: 400;
  line-height: 22px;
  text-align: left;
  vertical-align: top;
}
tbody tr:first-child > * {
  border-top: 1px solid #f00;
  height: 24px;
}
tbody:last-child tr:last-child > *,
tbody:last-child .sidename {
  border-bottom: 1px solid #f00;
}
.sidename {
  border-right: 1px solid #f00;
  vertical-align: middle;
}
.sidename span {
  display: block;
  line-height: 20px;
  text-align: center;
}
.total {
  padding-left: 2px;
  line-height: 20px;
}
.total b {
  margin: 0 2px;
  font-size: 16px;
  font-weight: 700;
  line-height: 16px;
}
.swatch {
  display: block;
  width: 16px;
  height: 16px;
  margin: 3px 0 0 2px;
}
.num {
  color: #ff0;
  font-size: 16px;
  font-weight: 700;
  text-align: right;
}
.minute {
  position: relative;
  border-bottom: 2px solid #f00;
}
.minute h2 {
  padding: 4px 0;
  text-align: center;
}
.category {
  position: relative;
  box-shadow: inset 0 -1px #f00;
}
.category:last-child {
  box-shadow: none;
}
.cathead {
  display: flex;
  justify-content: space-between;
}
.cathead h2 {
  flex: 1;
  padding-top: 4px;
  text-align: center;
}
.cathead button {
  border-top: 0;
  height: 25px;
}
.label {
  position: absolute;
  margin-top: -8px;
}
</style>
